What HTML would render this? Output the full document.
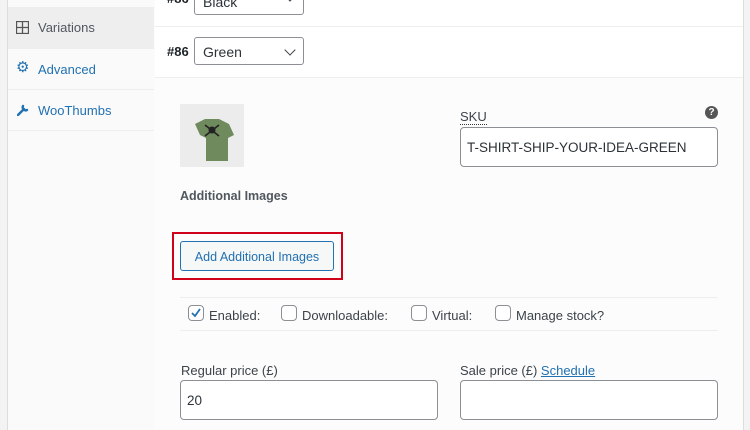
<!DOCTYPE html><html><head><style>
body{margin:0;width:750px;height:430px;overflow:hidden;background:#f3f3f4;font-family:"Liberation Sans",sans-serif;font-size:13px;color:#3c434a;position:relative}
.a{position:absolute}
.sb{left:7px;top:0;width:146px;height:430px;background:#fafafa;border-left:1px solid #ddd;border-right:1px solid #eee}
.tab{left:8px;width:146px;height:40px;border-bottom:1px solid #eee;line-height:42px;color:#2271b1}
.main{left:154px;top:0;width:589px;height:430px;background:#fcfcfc;border-right:1px solid #ddd}
.sel{background:#fff;border:1px solid #8c8f94;border-radius:3px;height:28px;box-sizing:border-box;line-height:28px;padding-left:8px;font-size:14px;color:#2c3338}
.chev{position:absolute;right:9px;top:8px;width:7px;height:7px;border-right:1.5px solid #3c434a;border-bottom:1.5px solid #3c434a;transform:rotate(45deg)}
.inp{background:#fff;border:1px solid #8c8f94;border-radius:4px;box-sizing:border-box;height:40px;line-height:39px;padding-left:6px;font-size:13.5px;color:#2c3338}
.cb{width:14px;height:14px;border:1px solid #8c8f94;border-radius:4px;background:#fff}
</style></head><body>
<div class="a sb"></div>
<div class="a tab" style="top:7px;background:#eee;color:#50575e;height:41px">
<svg class="a" style="left:8px;top:14px" width="13" height="13"><rect x="0.5" y="0.5" width="12" height="12" fill="none" stroke="#555" stroke-width="1.3"/><path d="M6.5 0v13M0 6.5h13" stroke="#555" stroke-width="1.3"/></svg>
<span class="a" style="left:30px">Variations</span></div>
<div class="a tab" style="top:49px"><span class="a" style="left:8px;font-size:15px;top:-2px">&#9881;</span><span class="a" style="left:30px">Advanced</span></div>
<div class="a tab" style="top:90px"><svg class="a" style="left:9px;top:14px" width="12" height="12"><path d="M1 11L7 5M6 2a3 3 0 0 0 4 4" stroke="#2271b1" stroke-width="2.4" fill="none" stroke-linecap="round"/></svg><span class="a" style="left:30px">WooThumbs</span></div>
<div class="a main"></div>
<div class="a" style="left:155px;top:0;width:588px;height:77px;background:#fff"></div>
<div class="a" style="left:155px;top:26px;width:588px;height:1px;background:#eee"></div>
<div class="a" style="left:155px;top:77px;width:588px;height:1px;background:#eee"></div>
<div class="a" style="left:167px;top:-9px;font-weight:bold;color:#1d2327">#86</div>
<div class="a sel" style="left:194px;top:-13px;width:110px">Black<span class="chev" style="top:4px"></span></div>
<div class="a" style="left:167px;top:44px;font-weight:bold;color:#1d2327">#86</div>
<div class="a sel" style="left:194px;top:37px;width:110px">Green<span class="chev"></span></div>
<div class="a" style="left:180px;top:104px;width:64px;height:63px;background:#ececec"><svg width="64" height="63"><path d="M15 20l10-5h14l10 5 5 11-6 3v23H26V34l-6-3z" fill="#6f8a5c"/><circle cx="32" cy="26" r="3.5" fill="#222"/><path d="M25 21l14 11M39 21L25 32" stroke="#222" stroke-width="1.6"/></svg></div>
<div class="a" style="left:180px;top:189px;font-weight:bold;color:#50575e;font-size:12.5px">Additional Images</div>
<div class="a" style="left:172px;top:232px;width:167px;height:44px;border:2px solid #d0021b"></div>
<div class="a" style="left:180px;top:241px;width:152px;height:28px;border:1px solid #2271b1;border-radius:3px;background:#f6f7f7;color:#2271b1;line-height:30px;text-align:center;font-size:12.5px">Add Additional Images</div>
<div class="a" style="left:460px;top:110px;border-bottom:1px dotted #333;line-height:14px">SKU</div>
<div class="a" style="left:705px;top:106px;width:13px;height:13px;border-radius:50%;background:#555;color:#fff;font-size:10px;font-weight:bold;text-align:center;line-height:13px">?</div>
<div class="a inp" style="left:460px;top:127px;width:258px">T-SHIRT-SHIP-YOUR-IDEA-GREEN</div>
<div class="a" style="left:180px;top:297px;width:538px;height:1px;background:#eee"></div>
<div class="a" style="left:180px;top:330px;width:538px;height:1px;background:#eee"></div>
<div class="a cb" style="left:188px;top:305px"><svg class="a" style="left:1px;top:1px" width="12" height="12"><path d="M2 6l3 3 5-7" stroke="#2271b1" stroke-width="1.8" fill="none"/></svg></div>
<div class="a" style="left:209px;top:308px">Enabled:</div>
<div class="a cb" style="left:281px;top:305px"></div>
<div class="a" style="left:302px;top:308px">Downloadable:</div>
<div class="a cb" style="left:411px;top:305px"></div>
<div class="a" style="left:432px;top:308px">Virtual:</div>
<div class="a cb" style="left:495px;top:305px"></div>
<div class="a" style="left:516px;top:308px">Manage stock?</div>
<div class="a" style="left:181px;top:363px">Regular price (£)</div>
<div class="a inp" style="left:180px;top:380px;width:258px">20</div>
<div class="a" style="left:460px;top:363px">Sale price (£) <span style="color:#2271b1;text-decoration:underline">Schedule</span></div>
<div class="a inp" style="left:460px;top:380px;width:258px"></div>
</body></html>
